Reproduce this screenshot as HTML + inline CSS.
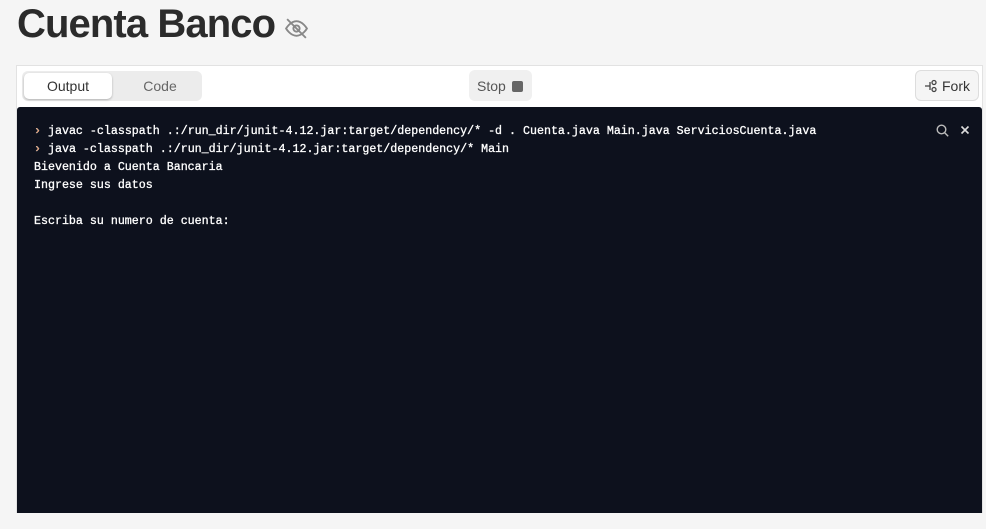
<!DOCTYPE html>
<html><head><style>
body{margin:0;background:#f5f5f5;width:986px;height:529px;overflow:hidden;font-family:"Liberation Sans",sans-serif}
h1{position:absolute;left:17px;top:2px;margin:0;font-size:40px;font-weight:bold;color:#2b2b2b;letter-spacing:-0.9px}
.panel{position:absolute;left:16px;top:65px;width:965px;height:447px;background:#fff;border:1px solid #e2e2e2;border-bottom:none}
.tabs{position:absolute;left:5px;top:5px;width:180px;height:30px;background:#ececec;border-radius:6px}
.tab{position:absolute;top:2px;height:26px;width:88px;line-height:26px;text-align:center;font-size:14px;color:#666}
.tab.on{left:2px;background:#fff;border-radius:5px;box-shadow:0 1px 2px rgba(0,0,0,.25);color:#333}
.stop{position:absolute;left:452px;top:4px;width:63px;height:31px;background:#f0f0f0;border-radius:6px;font-size:14px;color:#555;line-height:33px;padding-left:8px;box-sizing:border-box}
.stop i{position:absolute;left:43px;top:11px;width:11px;height:11px;background:#666;border-radius:2px}
.fork{position:absolute;left:898px;top:4px;width:64px;height:31px;border:1px solid #ddd;background:#f5f5f5;border-radius:6px;font-size:14px;color:#333;line-height:31px;box-sizing:border-box;padding-left:26px}
.term{position:absolute;left:0;top:41px;width:965px;height:406px;background:#0d111d;border-radius:3px 3px 0 0}
pre{margin:0;position:absolute;left:17px;top:16px;font-family:"Liberation Mono",monospace;font-size:11.65px;line-height:18px;color:#fff;-webkit-text-stroke:0.3px #fff}
.p{color:#f07020}
</style></head><body>
<h1>Cuenta Banco</h1>
<svg style="position:absolute;left:284px;top:16px" width="25" height="25" viewBox="0 0 24 24" fill="none" stroke="#888" stroke-width="1.8"><path d="M2 12s4-7 10-7 10 7 10 7-4 7-10 7S2 12 2 12z"/><circle cx="12" cy="12" r="3"/><path d="M3 3l18 18"/></svg>
<div class="panel">
<div class="tabs"><div class="tab on">Output</div><div class="tab" style="left:94px">Code</div></div>
<div class="stop">Stop<i></i></div>
<div class="fork"><svg style="position:absolute;left:8px;top:8px" width="14" height="14" viewBox="0 0 14 14" fill="none" stroke="#444" stroke-width="1.3"><path d="M1 7h5M6 3v8"/><circle cx="10" cy="3.5" r="2"/><circle cx="10" cy="10.5" r="2"/></svg>Fork</div>
<div class="term">
<pre><span class="p">›</span> javac -classpath .:/run_dir/junit-4.12.jar:target/dependency/* -d . Cuenta.java Main.java ServiciosCuenta.java
<span class="p">›</span> java -classpath .:/run_dir/junit-4.12.jar:target/dependency/* Main
Bievenido a Cuenta Bancaria
Ingrese sus datos

Escriba su numero de cuenta:</pre>
<svg style="position:absolute;left:919px;top:17px" width="13" height="13" viewBox="0 0 13 13" fill="none" stroke="#bbb" stroke-width="1.4"><circle cx="5.5" cy="5.5" r="4.3"/><path d="M8.7 8.7l3.5 3.5"/></svg>
<svg style="position:absolute;left:943px;top:18px" width="10" height="10" viewBox="0 0 10 10" stroke="#ddd" stroke-width="1.6"><path d="M1.5 1.5l7 7M8.5 1.5l-7 7"/></svg>
</div>
</div>
</body></html>
